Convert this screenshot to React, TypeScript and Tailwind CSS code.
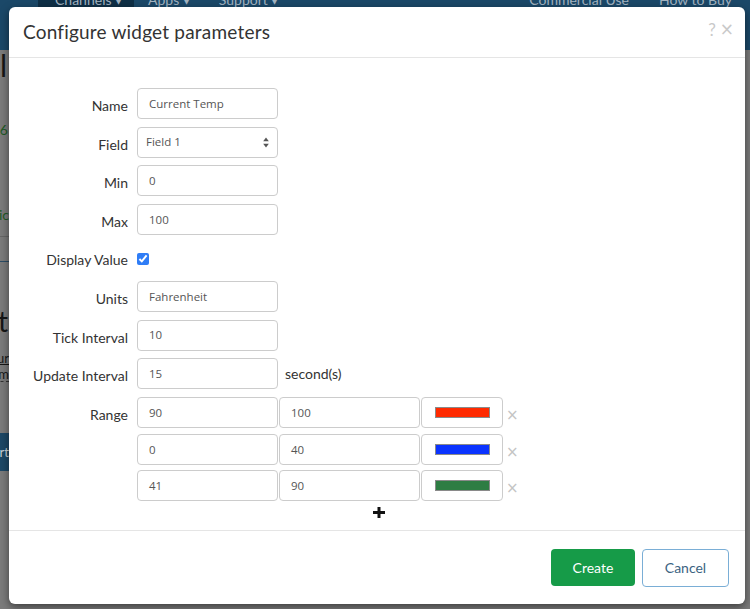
import React from "react";

const labelCls = "w-[119px] shrink-0 text-right text-[14px] leading-[20px] pt-[8px] text-[#333]";
const inputCls =
  "h-[31px] border border-[#cccccc] rounded-[4px] bg-white flex items-center text-[11.5px] text-[#555] font-['Open_Sans',sans-serif]";

const Row = ({ label, children, mb = "mb-[7.6px]" }: { label?: string; children: React.ReactNode; mb?: string }) => (
  <div className={`flex items-start h-[31px] ${mb}`}>
    <div className={labelCls}>{label}</div>
    <div className="ml-[9px] flex items-start">{children}</div>
  </div>
);

const TextBox = ({ value, w = "w-[141px]", pl = "pl-[11px]" }: { value: string; w?: string; pl?: string }) => (
  <div className={`${inputCls} ${w} ${pl}`}>{value}</div>
);

const RangeRow = ({ label, from, to, color, mb }: { label?: string; from: string; to: string; color: string; mb: string }) => (
  <Row label={label} mb={mb}>
    <TextBox value={from} />
    <div className="ml-[1px]">
      <TextBox value={to} />
    </div>
    <div className={`${inputCls} w-[82px] ml-[1px] justify-center`}>
      <div className="w-[55px] h-[11px] border border-[#8a8a8a]" style={{ backgroundColor: color }} />
    </div>
    <div className="ml-[3px] mt-[8px] text-[15px] leading-[20px] text-[#c4c4c4] font-['DejaVu_Sans',sans-serif]">×</div>
  </Row>
);

export default function App() {
  return (
    <div className="relative w-[750px] h-[609px] overflow-hidden bg-[#7b7b7b] font-['Lato',sans-serif]">
      {/* page behind the dialog, dimmed */}
      <div className="h-[50px] bg-[#1b4868] flex text-[14px] leading-[16px] text-[#a3b3c0] whitespace-nowrap">
        <div className="w-[38px]" />
        <div className="w-[96px] h-full bg-[#0f2f46] pl-[17px]">
          <div className="-mt-[8px]">Channels ▾</div>
        </div>
        <div className="ml-[14px] -mt-[8px]">Apps ▾</div>
        <div className="ml-[29px] -mt-[8px]">Support ▾</div>
        <div className="ml-auto -mt-[8px]">Commercial Use</div>
        <div className="ml-[30px] mr-[18px] -mt-[8px]">How to Buy</div>
      </div>
      <div className="w-[9px] overflow-hidden flex flex-col items-end whitespace-nowrap">
        <div className="h-[30px] text-[30px] leading-[30px] text-[#161616] pr-[2px]">l</div>
        <div className="mt-[43px] h-[14px] text-[14px] leading-[14px] text-[#1f5a26] pr-[1px]">56</div>
        <div className="mt-[71px] h-[14px] text-[14px] leading-[14px] text-[#1f5a26]">Public</div>
        <div className="mt-[14px] w-[9px] h-px bg-[#666]" />
        <div className="mt-[24px] w-[9px] h-px bg-[#2c4d66]" />
        <div className="mt-[46px] h-[26px] text-[28px] leading-[26px] text-[#161616] pr-[1px]">t</div>
        <div className="mt-[18px] h-[12px] text-[13px] leading-[12px] text-[#161616] underline">Your</div>
        <div className="mt-[4px] h-[14px] text-[13px] leading-[12px] text-[#161616] border-b border-dashed border-[#333]">Im</div>
        <div className="mt-[51px] w-[9px] h-[38px] bg-[#1d4866] text-[13px] leading-[38px] text-[#c9d3da] flex justify-end">rt</div>
      </div>

      {/* dialog */}
      <div className="absolute left-[9px] top-[7px] w-[736px] h-[597px] bg-white rounded-[6px] shadow-[0_3px_9px_rgba(0,0,0,0.5)] flex flex-col">
        <div className="h-[51px] shrink-0 border-b border-[#e5e5e5] flex items-center pl-[14px] pr-[11px]">
          <div className="text-[19px] text-[#333] tracking-[0.2px] mt-[1px]">Configure widget parameters</div>
          <div className="ml-auto flex items-center gap-[4px] text-[#c9c9c9] -mt-[4px]">
            <span className="text-[17px]">?</span>
            <span className="text-[17px] font-['DejaVu_Sans',sans-serif]">×</span>
          </div>
        </div>

        <div className="flex-1 pt-[30px]">
          <Row label="Name">
            <TextBox value="Current Temp" />
          </Row>
          <Row label="Field">
            <div className={`${inputCls} w-[141px] pl-[8px] pr-[8px] justify-between`}>
              <span>Field 1</span>
              <svg width="6" height="11" viewBox="0 0 6 11">
                <path d="M3 0.5 L5.8 4.2 H0.2 Z" fill="#555" />
                <path d="M3 10.5 L5.8 6.8 H0.2 Z" fill="#555" />
              </svg>
            </div>
          </Row>
          <Row label="Min">
            <TextBox value="0" />
          </Row>
          <Row label="Max">
            <TextBox value="100" />
          </Row>
          <Row label="Display Value">
            <input type="checkbox" defaultChecked className="mt-[11px] w-[12px] h-[12px] m-0 accent-[#2f7df6]" />
          </Row>
          <Row label="Units">
            <TextBox value="Fahrenheit" />
          </Row>
          <Row label="Tick Interval">
            <TextBox value="10" />
          </Row>
          <Row label="Update Interval">
            <TextBox value="15" />
            <div className="ml-[7px] pt-[6px] text-[14px] leading-[20px] text-[#333]">second(s)</div>
          </Row>
          <RangeRow label="Range" from="90" to="100" color="#ff2a00" mb="mb-[6.4px]" />
          <RangeRow from="0" to="40" color="#0a33ff" mb="mb-[5px]" />
          <RangeRow from="41" to="90" color="#2e7d43" mb="mb-0" />
          <div className="mt-[6px] pl-[364px]">
            <svg width="12" height="11" viewBox="0 0 12 11">
              <rect x="0" y="4" width="12" height="3" fill="#111" />
              <rect x="4.5" y="0" width="3" height="11" fill="#111" />
            </svg>
          </div>
        </div>

        <div className="h-[74px] shrink-0 border-t border-[#e5e5e5] flex items-center justify-end pr-[16px] gap-[7px]">
          <button className="w-[84px] h-[37px] rounded-[4px] bg-[#169b48] text-white text-[14px]">Create</button>
          <button className="w-[87px] h-[38px] rounded-[4px] border border-[#7aaed6] bg-white text-[#3c6382] text-[14px]">
            Cancel
          </button>
        </div>
      </div>
    </div>
  );
}
